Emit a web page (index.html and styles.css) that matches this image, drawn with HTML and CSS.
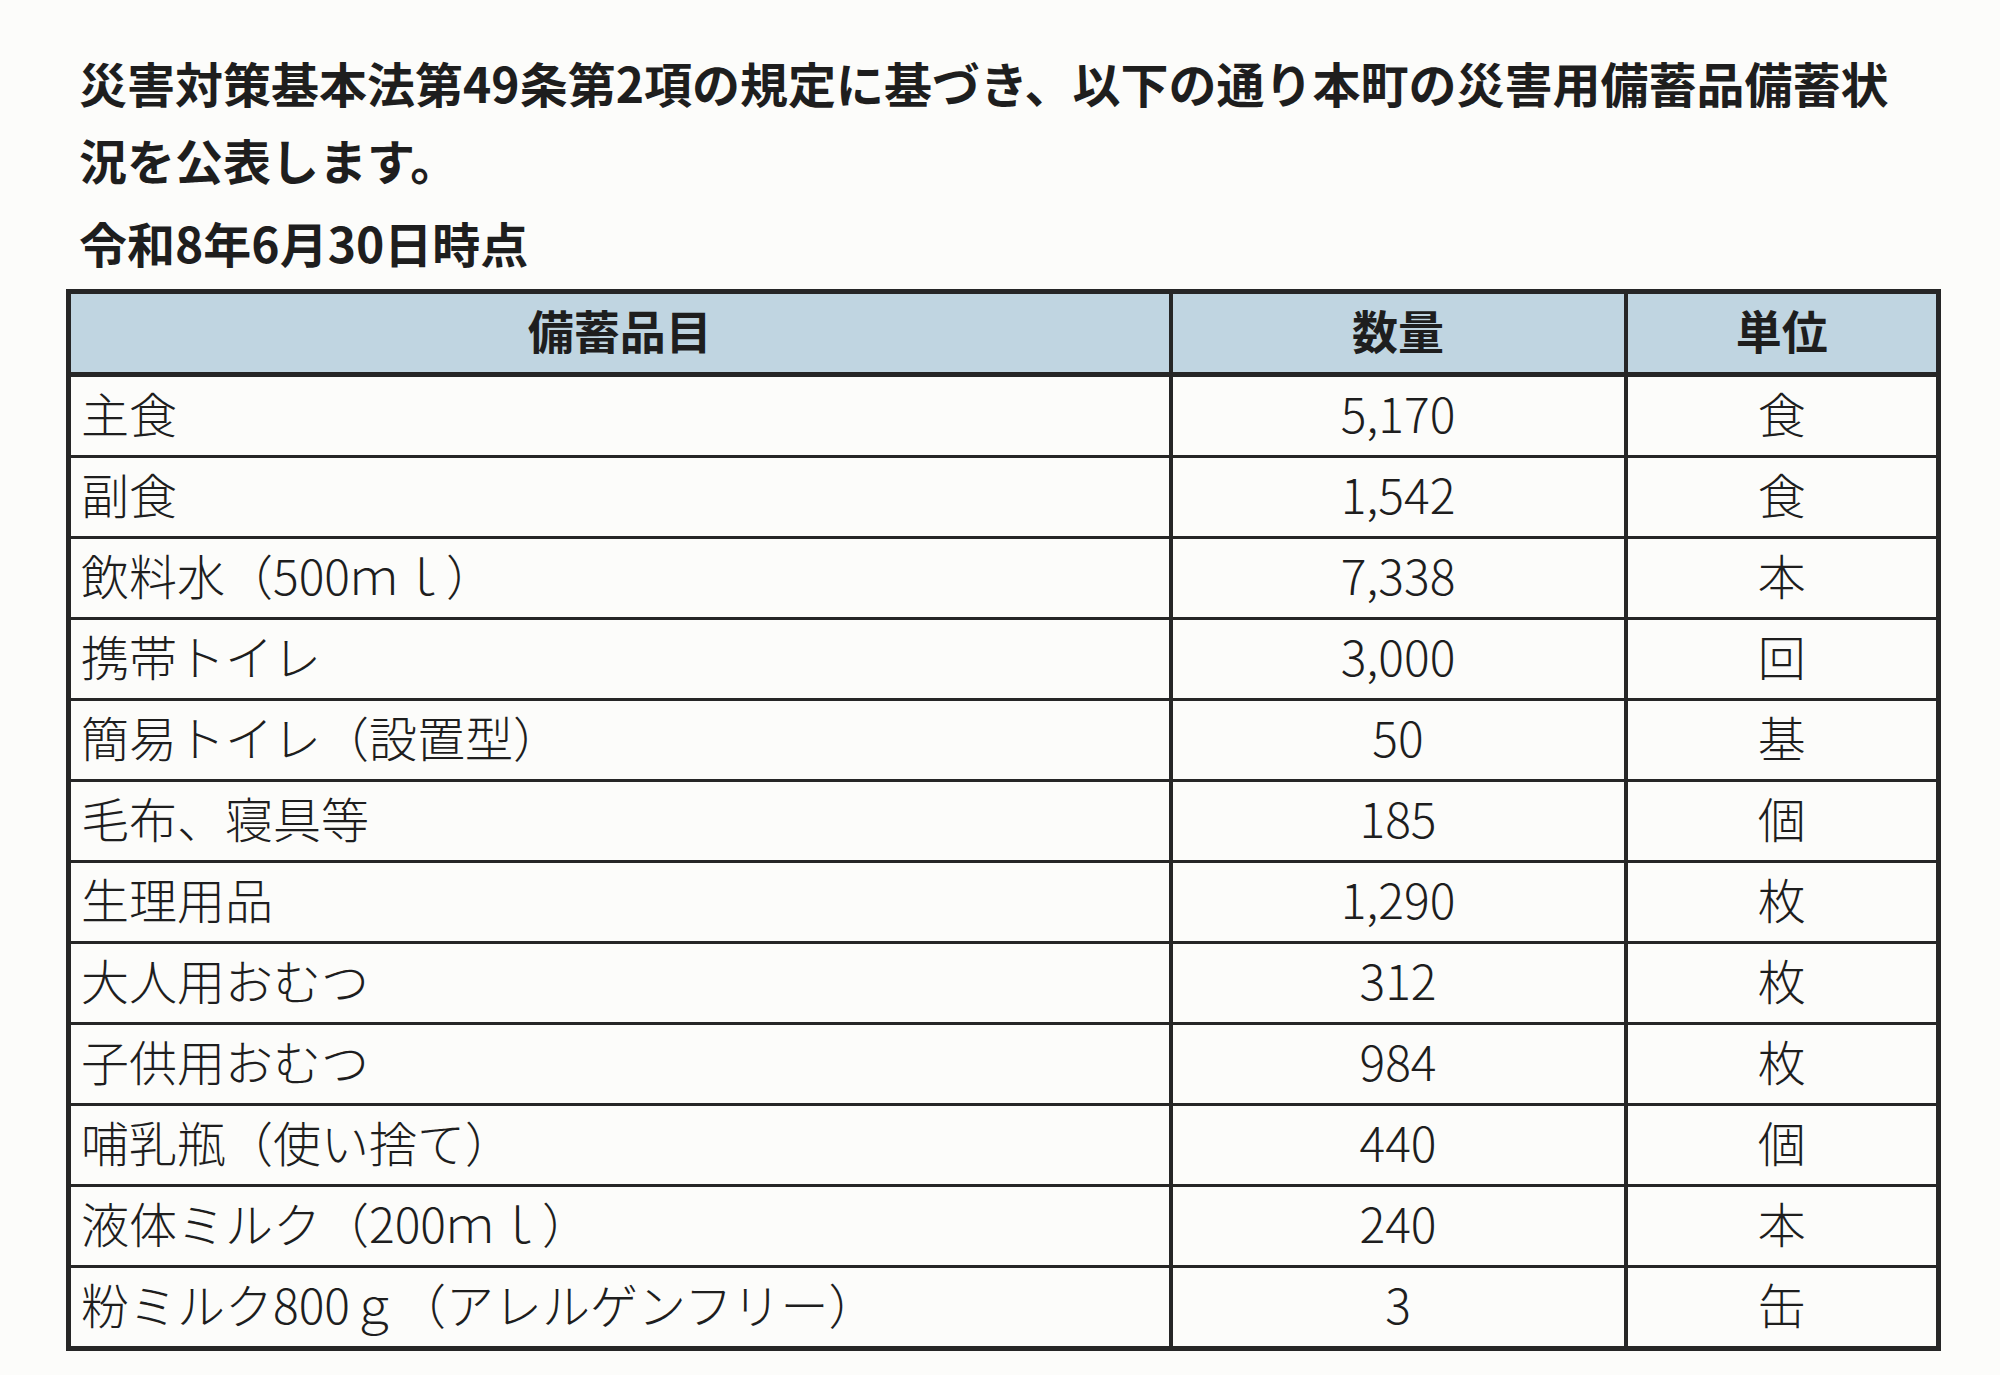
FILE: index.html
```html
<!DOCTYPE html>
<html lang="ja">
<head>
<meta charset="utf-8">
<title>災害用備蓄品備蓄状況</title>
<link rel="stylesheet" href="styles.css">
</head>
<body>
<main class="page">
  <p class="intro">災害対策基本法第49条第2項の規定に基づき、以下の通り本町の災害用備蓄品備蓄状況を公表します。</p>
  <p class="asof">令和8年6月30日時点</p>
  <table class="stock">
    <colgroup>
      <col class="c-item">
      <col class="c-qty">
      <col class="c-unit">
    </colgroup>
    <thead>
      <tr><th>備蓄品目</th><th>数量</th><th>単位</th></tr>
    </thead>
    <tbody>
      <tr><td class="item">主食</td><td class="num">5,170</td><td class="unit">食</td></tr>
      <tr><td class="item">副食</td><td class="num">1,542</td><td class="unit">食</td></tr>
      <tr><td class="item">飲料水（500ｍｌ）</td><td class="num">7,338</td><td class="unit">本</td></tr>
      <tr><td class="item">携帯トイレ</td><td class="num">3,000</td><td class="unit">回</td></tr>
      <tr><td class="item">簡易トイレ（設置型）</td><td class="num">50</td><td class="unit">基</td></tr>
      <tr><td class="item">毛布、寝具等</td><td class="num">185</td><td class="unit">個</td></tr>
      <tr><td class="item">生理用品</td><td class="num">1,290</td><td class="unit">枚</td></tr>
      <tr><td class="item">大人用おむつ</td><td class="num">312</td><td class="unit">枚</td></tr>
      <tr><td class="item">子供用おむつ</td><td class="num">984</td><td class="unit">枚</td></tr>
      <tr><td class="item">哺乳瓶（使い捨て）</td><td class="num">440</td><td class="unit">個</td></tr>
      <tr><td class="item">液体ミルク（200ｍｌ）</td><td class="num">240</td><td class="unit">本</td></tr>
      <tr><td class="item">粉ミルク800ｇ（アレルゲンフリー）</td><td class="num">3</td><td class="unit">缶</td></tr>
    </tbody>
  </table>
</main>
</body>
</html>
```

FILE: styles.css
```css
html, body {
  margin: 0;
  padding: 0;
  background: #fcfcfa;
}

body {
  font-family: "Noto Sans CJK JP", "Noto Sans", "Liberation Sans", sans-serif;
  color: #1e1e1e;
}

.page {
  padding-top: 44px;
}

.intro {
  margin: 0 0 0 79px;
  width: 1830px;
  font-size: 48px;
  line-height: 77px;
  font-weight: 700;
}

.asof {
  margin: 3px 0 0 79px;
  font-size: 48px;
  line-height: 82px;
  font-weight: 700;
}

.stock {
  margin: 6px 0 0 66px;
  width: 1870px;
  border-collapse: collapse;
  table-layout: fixed;
  border: 5px solid #262626;
}

.c-item { width: 1102px; }
.c-qty { width: 455px; }
.c-unit { width: 313px; }

.stock th {
  height: 70px;
  padding: 0 0 8px;
  background: #c0d5e1;
  font-size: 46px;
  font-weight: 700;
  line-height: 1;
  text-align: center;
  border-left: 4px solid #262626;
  border-right: 4px solid #262626;
  border-bottom: 5px solid #262626;
}

.stock td {
  height: 69px;
  padding: 0 0 9px;
  font-size: 48px;
  font-weight: 300;
  line-height: 1;
  border-left: 4px solid #262626;
  border-right: 4px solid #262626;
  border-top: 3px solid #262626;
  border-bottom: 3px solid #262626;
}

.stock td.item {
  padding-left: 10px;
  text-align: left;
}

.stock td.num,
.stock td.unit {
  text-align: center;
}
```
